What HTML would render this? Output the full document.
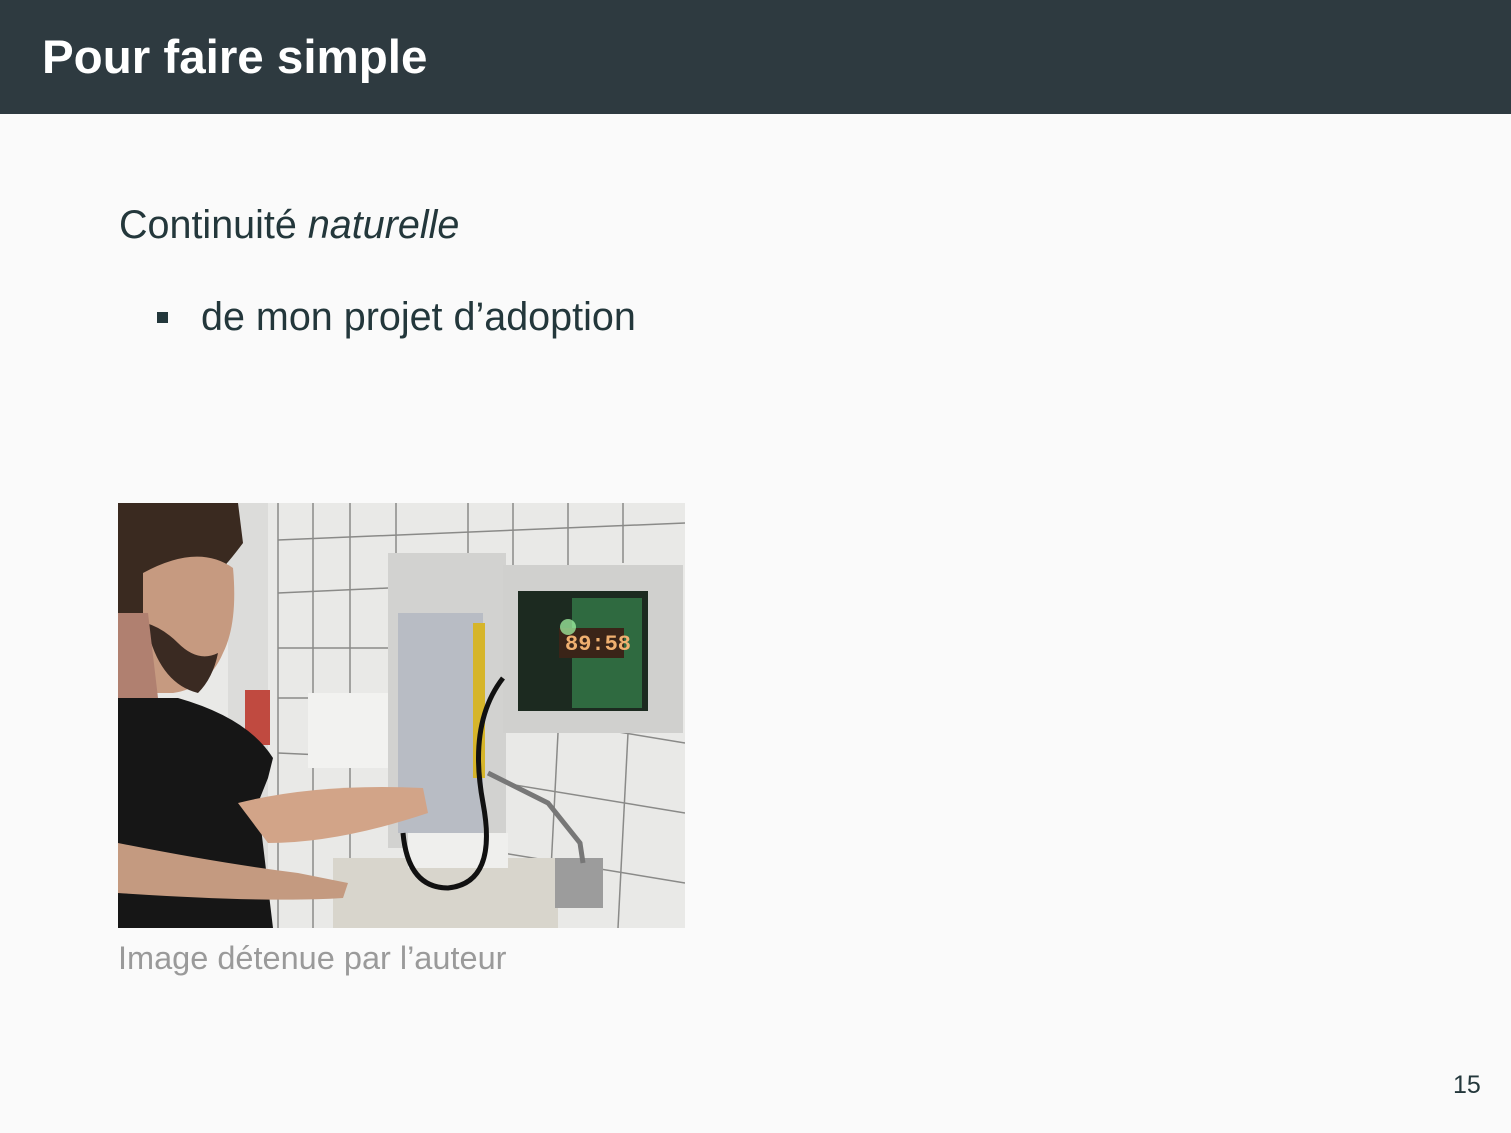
<!DOCTYPE html>
<html><head><meta charset="utf-8"><style>
body{margin:0;width:1511px;height:1133px;background:#fafafa;position:relative;overflow:hidden;font-family:"Liberation Sans",sans-serif;color:#23373b}
.hdr{position:absolute;left:0;top:0;width:1511px;height:114px;background:#2e3a40}
.hdr h1{position:absolute;left:42px;top:30px;margin:0;color:#fff;font-size:47.5px;font-weight:bold;line-height:56px}
.t1{position:absolute;left:119px;top:203px;font-size:39.5px;line-height:44px}
.bul{position:absolute;left:157px;top:312px;width:11px;height:11px;background:#23373b}
.t2{position:absolute;left:201px;top:295px;font-size:39.5px;line-height:44px}
.photo{position:absolute;left:118px;top:503px;width:567px;height:425px}
.cap{position:absolute;left:118px;top:938px;font-size:32.5px;line-height:40px;color:#9a9a9a}
.pn{position:absolute;left:1453px;top:1069px;font-size:25px;line-height:32px}
</style></head><body>
<div class="hdr"><h1>Pour faire simple</h1></div>
<div class="t1">Continuité <i>naturelle</i></div>
<div class="bul"></div>
<div class="t2">de mon projet d’adoption</div>
<svg class="photo" viewBox="0 0 567 425" xmlns="http://www.w3.org/2000/svg">
<rect width="567" height="425" fill="#e9e9e7"/>
<g stroke="#8a8a88" stroke-width="1.5">
<line x1="160" y1="0" x2="160" y2="425"/><line x1="195" y1="0" x2="195" y2="425"/><line x1="232" y1="0" x2="232" y2="425"/>
<line x1="278" y1="0" x2="278" y2="60"/><line x1="350" y1="0" x2="350" y2="60"/><line x1="395" y1="0" x2="395" y2="70"/><line x1="450" y1="0" x2="450" y2="65"/><line x1="505" y1="0" x2="505" y2="60"/>
<line x1="440" y1="230" x2="430" y2="425"/><line x1="510" y1="230" x2="500" y2="425"/>
<line x1="160" y1="37" x2="567" y2="20"/><line x1="160" y1="90" x2="270" y2="85"/><line x1="160" y1="145" x2="270" y2="145"/><line x1="160" y1="195" x2="270" y2="195"/><line x1="160" y1="250" x2="270" y2="255"/><line x1="160" y1="300" x2="270" y2="305"/>
<line x1="385" y1="210" x2="567" y2="240"/><line x1="385" y1="280" x2="567" y2="310"/><line x1="385" y1="350" x2="567" y2="380"/>
</g>
<rect x="110" y="0" width="40" height="425" fill="#dcdcda"/>
<rect x="127" y="187" width="25" height="55" fill="#c04a40"/>
<rect x="190" y="190" width="80" height="75" fill="#f2f2f0"/>
<rect x="270" y="50" width="118" height="295" fill="#d2d2d0"/>
<rect x="280" y="110" width="85" height="220" fill="#b8bcc4"/>
<rect x="355" y="120" width="12" height="155" fill="#d6b52a"/>
<rect x="385" y="62" width="180" height="168" fill="#d0d0ce"/>
<rect x="400" y="88" width="130" height="120" fill="#1c2a20"/>
<rect x="454" y="95" width="70" height="110" fill="#2f6a40"/>
<rect x="441" y="125" width="65" height="30" fill="#3a2418"/>
<text x="447" y="147" font-family="Liberation Mono" font-size="22" fill="#f0b070" font-weight="bold">89:58</text>
<circle cx="450" cy="124" r="8" fill="#aaffaa" opacity=".7"/>
<rect x="215" y="355" width="225" height="70" fill="#d8d5cc"/>
<rect x="290" y="330" width="100" height="35" fill="#efefed"/>
<rect x="437" y="355" width="48" height="50" fill="#9c9c9c"/>
<path d="M385 175 Q350 220 365 300 Q380 380 330 385 Q290 385 285 330" fill="none" stroke="#111" stroke-width="5"/>
<path d="M370 270 L430 300 L462 340 L465 360" fill="none" stroke="#777" stroke-width="5"/>
<path d="M0 0 H120 L125 40 Q110 60 100 70 L30 120 L0 130Z" fill="#3a2a20"/>
<path d="M25 70 Q80 40 115 65 Q120 120 105 150 Q90 185 55 190 L25 190Z" fill="#c69a80"/>
<path d="M28 120 Q40 180 80 190 Q95 175 100 150 Q80 160 60 140 Q45 125 28 120Z" fill="#3a2a22"/>
<path d="M0 110 L30 110 L40 195 L0 195Z" fill="#b08070"/>
<path d="M0 195 L60 195 Q130 215 155 255 L150 275 L140 300 L155 425 L0 425Z" fill="#161616"/>
<path d="M120 300 Q200 280 305 285 L310 310 Q220 340 150 340 Z" fill="#d2a488"/>
<path d="M0 340 Q100 360 180 370 L230 380 L225 395 Q150 400 0 390Z" fill="#c49a80"/>
</svg>
<div class="cap">Image détenue par l’auteur</div>
<div class="pn">15</div>
</body></html>
